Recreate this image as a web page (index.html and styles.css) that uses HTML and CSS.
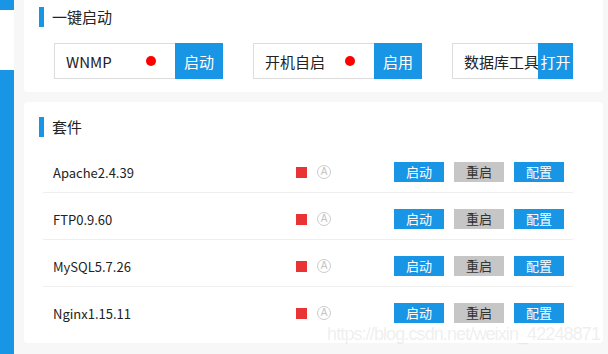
FILE: index.html
```html
<!DOCTYPE html>
<html lang="zh-cn">
<head>
    <meta charset="utf-8">
    <meta name="viewport" content="width=device-width, initial-scale=1.0">
    <title>一键启动 | 套件</title>
    <link rel="stylesheet" href="styles.css">
</head>
<body>
    <div class="layout">
        <div class="sidebar">
            <div class="side-top"></div>
            <div class="side-active"></div>
            <div class="side-rest"></div>
        </div>
        <div class="main">
            <div class="card card-quick">
                <div class="card-title">一键启动</div>
                <div class="quick">
                    <div class="qbox">
                        <div class="qname">WNMP<span class="dot"></span></div>
                        <div class="qbtn">启动</div>
                    </div>
                    <div class="qbox">
                        <div class="qname">开机自启<span class="dot"></span></div>
                        <div class="qbtn">启用</div>
                    </div>
                    <div class="qbox">
                        <div class="qname qname-small">数据库工具</div>
                        <div class="qbtn qbtn-small">打开</div>
                    </div>
                </div>
            </div>
            <div class="card card-suite">
                <div class="card-title">套件</div>
                <div class="suite-list">
                    <div class="suite-row">
                        <div class="suite-name">Apache2.4.39</div>
                        <span class="status"></span>
                        <span class="auto">A</span>
                        <div class="actions">
                            <div class="btn">启动</div>
                            <div class="btn btn-gray">重启</div>
                            <div class="btn">配置</div>
                        </div>
                    </div>
                    <div class="suite-row">
                        <div class="suite-name">FTP0.9.60</div>
                        <span class="status"></span>
                        <span class="auto">A</span>
                        <div class="actions">
                            <div class="btn">启动</div>
                            <div class="btn btn-gray">重启</div>
                            <div class="btn">配置</div>
                        </div>
                    </div>
                    <div class="suite-row">
                        <div class="suite-name">MySQL5.7.26</div>
                        <span class="status"></span>
                        <span class="auto">A</span>
                        <div class="actions">
                            <div class="btn">启动</div>
                            <div class="btn btn-gray">重启</div>
                            <div class="btn">配置</div>
                        </div>
                    </div>
                    <div class="suite-row">
                        <div class="suite-name">Nginx1.15.11</div>
                        <span class="status"></span>
                        <span class="auto">A</span>
                        <div class="actions">
                            <div class="btn">启动</div>
                            <div class="btn btn-gray">重启</div>
                            <div class="btn">配置</div>
                        </div>
                    </div>
                </div>
            </div>
        </div>
    </div>
    <div class="watermark">https://blog.csdn.net/weixin_42248871</div>
</body>
</html>
```

FILE: styles.css
```css
body {
    font-family: "Noto Sans CJK SC", "Noto Sans", sans-serif;
    margin: 0;
    padding: 0;
    background-color: #f7f7f7;
    color: #222;
    overflow: hidden;
}

.layout {
    display: flex;
    height: 100vh;
}

.sidebar {
    width: 14px;
    display: flex;
    flex-direction: column;
}

.side-top {
    height: 10px;
    background-color: #1895e5;
}

.side-active {
    height: 60px;
    background-color: #ffffff;
}

.side-rest {
    flex: 1;
    background-color: #1895e5;
}

.main {
    flex: 1;
    margin-top: -8px;
    padding: 0 5px 0 10px;
}

.card {
    background-color: #fff;
    border-radius: 4px;
    padding: 15px 15px 13px;
}

.card-suite {
    margin-top: 10px;
    padding-bottom: 10px;
}

.card-title {
    display: flex;
    align-items: center;
    height: 20px;
    border-left: 5px solid #1895e5;
    padding-left: 8px;
    font-size: 15px;
    line-height: 20px;
}

.quick {
    display: flex;
    gap: 30px;
    margin-top: 16px;
    padding-left: 15px;
}

.qbox {
    display: flex;
    height: 36px;
}

.qname {
    width: 121px;
    box-sizing: border-box;
    border: 1px solid #ddd;
    border-right: none;
    padding: 0 19px 0 11px;
    display: flex;
    align-items: center;
    justify-content: space-between;
    font-size: 15px;
    white-space: nowrap;
}

.qname-small {
    width: 86px;
    padding-right: 0;
}

.dot {
    width: 10px;
    height: 10px;
    border-radius: 50%;
    background-color: #ff0000;
}

.qbtn {
    width: 48px;
    display: flex;
    align-items: center;
    justify-content: center;
    background-color: #1895e5;
    color: #fff;
    font-size: 15px;
}

.qbtn-small {
    width: 35px;
}

.suite-list {
    margin: 9px 15px 0 4px;
}

.suite-row {
    display: flex;
    align-items: center;
    height: 20px;
    padding: 16px 9px 10px 10px;
    border-bottom: 1px solid #eee;
}

.suite-row:last-child {
    border-bottom: none;
}

.suite-name {
    width: 243px;
    font-size: 13px;
}

.status {
    width: 11px;
    height: 11px;
    background-color: #e83434;
}

.auto {
    width: 14px;
    height: 14px;
    box-sizing: border-box;
    margin-left: 10px;
    border: 1px solid #ccc;
    border-radius: 50%;
    color: #c4c4c4;
    font-family: "Liberation Sans", sans-serif;
    font-size: 10px;
    line-height: 12px;
    text-align: center;
}

.actions {
    display: flex;
    gap: 10px;
    margin-left: auto;
}

.btn {
    width: 50px;
    height: 20px;
    line-height: 20px;
    text-align: center;
    font-size: 13px;
    background-color: #1895e5;
    color: #fff;
}

.btn-gray {
    background-color: #c6c6c6;
    color: #333;
}

.watermark {
    position: absolute;
    right: 8px;
    bottom: 9px;
    font-family: "Liberation Sans", sans-serif;
    font-size: 18px;
    letter-spacing: -0.9px;
    color: rgba(200, 200, 200, 0.3);
}
```
